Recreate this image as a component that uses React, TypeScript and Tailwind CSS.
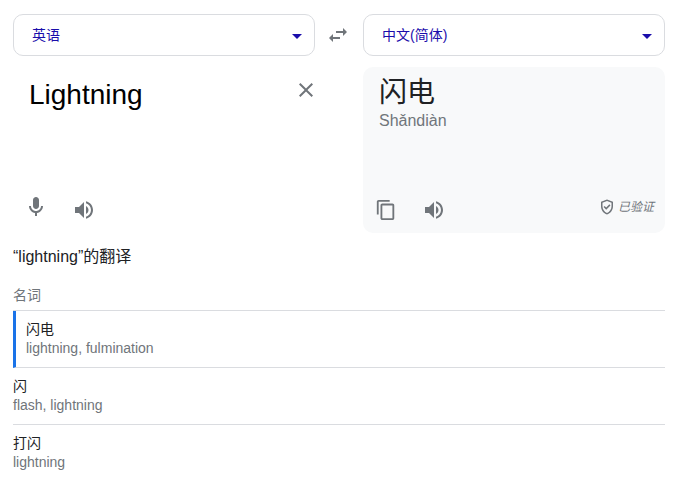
import React from 'react';

const cjkFont = `font-['Liberation_Sans','Noto_Sans_CJK_SC',sans-serif]`;

const ICON_PATHS = {
  close:
    'M19 6.41L17.59 5 12 10.59 6.41 5 5 6.41 10.59 12 5 17.59 6.41 19 12 13.41 17.59 19 19 17.59 13.41 12z',
  mic: 'M12 14c1.66 0 3-1.34 3-3V5c0-1.66-1.34-3-3-3S9 3.34 9 5v6c0 1.66 1.34 3 3 3zM17 11c0 2.76-2.24 5-5 5s-5-2.24-5-5H5c0 3.53 2.61 6.43 6 6.92V21h2v-3.08c3.39-.49 6-3.39 6-6.92h-2z',
  volume:
    'M3 9v6h4l5 5V4L7 9H3zm13.5 3c0-1.77-1.02-3.29-2.5-4.03v8.05c1.48-.73 2.5-2.25 2.5-4.02zM14 3.23v2.06c2.89.86 5 3.54 5 6.71s-2.11 5.85-5 6.71v2.06c4.01-.91 7-4.49 7-8.77s-2.99-7.86-7-8.77z',
  copy: 'M16 1H4c-1.1 0-2 .9-2 2v14h2V3h12V1zm3 4H8c-1.1 0-2 .9-2 2v14c0 1.1.9 2 2 2h11c1.1 0 2-.9 2-2V7c0-1.1-.9-2-2-2zm0 16H8V7h11v14z',
  swap: 'M6.99 11L3 15l3.99 4v-3H14v-2H6.99v-3zM21 9l-3.99-4v3H10v2h7.01v3L21 9z',
  shield:
    'M12 2L4 5v6.09c0 5.05 3.41 9.76 8 10.91 4.59-1.15 8-5.86 8-10.91V5l-8-3zm6 9.09c0 4-2.55 7.7-6 8.83-3.45-1.13-6-4.82-6-8.83v-4.7l6-2.25 6 2.25v4.7zM8.82 10.59L7.4 12l3.54 3.54 5.66-5.66-1.41-1.41-4.24 4.24z',
};

interface IconProps {
  name: keyof typeof ICON_PATHS;
  className: string;
}

const Icon: React.FC<IconProps> = ({ name, className }) => (
  <svg viewBox="0 0 24 24" className={`${className} fill-[#70757a] shrink-0`}>
    <path d={ICON_PATHS[name]} />
  </svg>
);

const LangSelect: React.FC<{ label: string }> = ({ label }) => (
  <div className="h-[42px] border border-[#dadce0] rounded-[10px] flex items-center pl-[18px] pr-[12px]">
    <span className="text-[14px] text-[#1a0dab] flex-1">{label}</span>
    <span className="mt-[2px] w-0 h-0 border-x-[5px] border-x-transparent border-t-[5px] border-t-[#1a0dab]" />
  </div>
);

interface WordRowProps {
  word: string;
  meaning: string;
  active?: boolean;
}

const WordRow: React.FC<WordRowProps> = ({ word, meaning, active }) => (
  <div
    className={`h-[57px] border-b border-[#dadce0] text-[14px] leading-[19px] ${
      active ? 'pl-[10px] pt-[9px] border-l-[3px] border-l-[#1a73e8]' : 'pt-[9px]'
    }`}
  >
    <div className="text-[#202124]">{word}</div>
    <div className="text-[#70757a]">{meaning}</div>
  </div>
);

export default function App() {
  return (
    <div className={`${cjkFont} w-[689px] h-[484px] bg-white pl-[13px] pr-[24px] pt-[14px] overflow-hidden`}>
      <div className="grid grid-cols-[1fr_48px_1fr]">
        <LangSelect label="英语" />
        <div className="flex items-center justify-center">
          <Icon name="swap" className="w-[24px] h-[24px] ml-[-2px]" />
        </div>
        <LangSelect label="中文(简体)" />
      </div>

      <div className="grid grid-cols-[1fr_48px_1fr] mt-[11px] h-[166px]">
        <div className="flex flex-col pl-[16px] pt-[10px]">
          <div className="flex justify-between">
            <span className="text-[28px] leading-[36px] text-black">Lightning</span>
            <Icon name="close" className="w-[24px] h-[24px] mr-[-3px] mt-[1px]" />
          </div>
          <div className="flex items-end gap-[24px] mt-auto mb-[11px] ml-[-5px]">
            <Icon name="mic" className="w-[24px] h-[24px] mb-[3px]" />
            <Icon name="volume" className="w-[24px] h-[24px]" />
          </div>
        </div>
        <div />
        <div className="flex flex-col bg-[#f8f9fa] rounded-[10px] pl-[16px] pt-[8px]">
          <div className="text-[28px] leading-[36px] text-[#202124]">闪电</div>
          <div className="text-[16px] leading-[20px] text-[#70757a]">Shǎndiàn</div>
          <div className="flex items-end mt-auto mb-[11px] ml-[-4px] pr-[11px]">
            <Icon name="copy" className="w-[22px] h-[22px] mb-[1px]" />
            <Icon name="volume" className="w-[24px] h-[24px] ml-[25px]" />
            <Icon name="shield" className="w-[18px] h-[18px] ml-auto mb-[6px]" />
            <span className="text-[12px] leading-[18px] italic text-[#70757a] ml-[2px] mb-[6px]">已验证</span>
          </div>
        </div>
      </div>

      <div className="text-[16px] leading-[20px] text-[#202124] mt-[14px]">“lightning”的翻译</div>
      <div className="text-[14px] leading-[20px] text-[#70757a] mt-[18px] pb-[5px] border-b border-[#dadce0]">名词</div>
      <WordRow word="闪电" meaning="lightning, fulmination" active />
      <WordRow word="闪" meaning="flash, lightning" />
      <div className="text-[14px] leading-[19px] pt-[9px]">
        <div className="text-[#202124]">打闪</div>
        <div className="text-[#70757a]">lightning</div>
      </div>
    </div>
  );
}
